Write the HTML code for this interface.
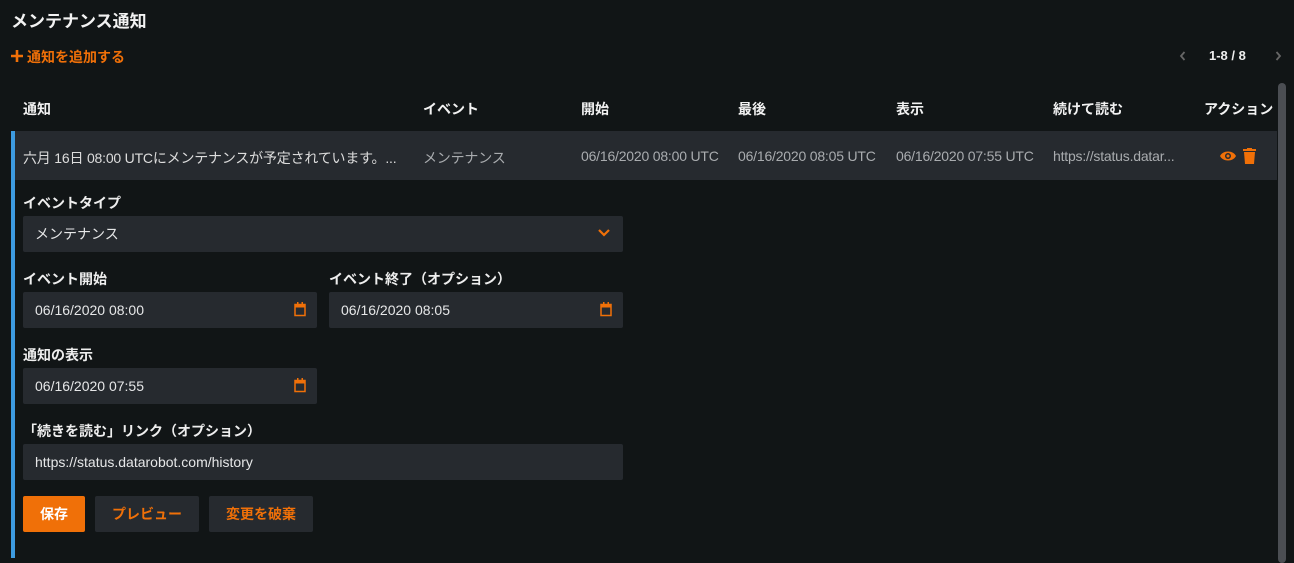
<!DOCTYPE html>
<html><head><meta charset="utf-8"><style>
*{margin:0;padding:0;box-sizing:border-box}
body{width:1294px;height:558px;background:#111516;font-family:"Liberation Sans","Noto Sans CJK JP",sans-serif;color:#e6e7e8;position:relative;overflow:hidden;font-size:14px}
.a{position:absolute;white-space:nowrap}
.h{font-weight:bold;font-size:14px;color:#f2f2f2}
.o{color:#f07008}
.in{position:absolute;background:#262a2f;border-radius:2px;height:36px;font-size:14px;color:#e6e7e8;padding:0 12px;line-height:36px}
.lab{position:absolute;font-weight:bold;font-size:14px;color:#eee}
.cell{position:absolute;top:148px;font-size:14px;color:#a9acaf;letter-spacing:-0.2px}
svg{position:absolute}
</style></head><body>
<div class="a" style="left:11px;top:7px;font-size:17px;font-weight:bold;color:#f2f2f2">メンテナンス通知</div>
<svg style="left:11px;top:50px" width="12" height="12" viewBox="0 0 12 12"><path d="M6 0V12M0 6H12" stroke="#f07008" stroke-width="2.6"/></svg>
<div class="a o" style="left:27px;top:47px;font-size:14px;font-weight:bold">通知を追加する</div>
<svg style="left:1179px;top:51px" width="7" height="10" viewBox="0 0 7 10"><path d="M5.5 1L2 5L5.5 9" stroke="#666" stroke-width="1.8" fill="none"/></svg>
<div class="a" style="left:1209px;top:48px;font-weight:bold;font-size:13px;color:#eee">1-8 / 8</div>
<svg style="left:1275px;top:51px" width="7" height="10" viewBox="0 0 7 10"><path d="M1.5 1L5 5L1.5 9" stroke="#666" stroke-width="1.8" fill="none"/></svg>
<div class="a h" style="left:23px;top:99px">通知</div>
<div class="a h" style="left:423px;top:99px">イベント</div>
<div class="a h" style="left:581px;top:99px">開始</div>
<div class="a h" style="left:738px;top:99px">最後</div>
<div class="a h" style="left:896px;top:99px">表示</div>
<div class="a h" style="left:1053px;top:99px">続けて読む</div>
<div class="a h" style="left:1204px;top:99px">アクション</div>
<div class="a" style="left:11px;top:131px;width:1266px;height:49px;background:#262a2f"></div>
<div class="a" style="left:11px;top:131px;width:4px;height:427px;background:#3d9be0"></div>
<div class="a" style="left:1278px;top:83px;width:8px;height:480px;background:#4b4e53;border-radius:4px"></div>
<div class="cell" style="left:23px;color:#ddd">六月 16日 08:00 UTCにメンテナンスが予定されています。...</div>
<div class="cell" style="left:423px">メンテナンス</div>
<div class="cell" style="left:581px">06/16/2020 08:00 UTC</div>
<div class="cell" style="left:738px">06/16/2020 08:05 UTC</div>
<div class="cell" style="left:896px">06/16/2020 07:55 UTC</div>
<div class="cell" style="left:1053px">https://status.datar...</div>
<svg style="left:1219px;top:149px" width="18" height="14" viewBox="0 0 18 14"><path d="M1 7C4 1 14 1 17 7C14 13 4 13 1 7Z" fill="#f07008"/><circle cx="9" cy="7" r="3" fill="#262a2f"/><circle cx="9" cy="7" r="1.5" fill="#f07008"/></svg>
<svg style="left:1243px;top:148px" width="13" height="16" viewBox="0 0 13 16"><rect x="0" y="1" width="13" height="2" fill="#f07008"/><rect x="4" y="0" width="5" height="2" fill="#f07008"/><path d="M1 4H12L11 16H2Z" fill="#f07008"/></svg>
<div class="lab" style="left:23px;top:193px">イベントタイプ</div>
<div class="in" style="left:23px;top:216px;width:600px">メンテナンス</div>
<svg style="left:597px;top:228px" width="14" height="10" viewBox="0 0 14 10"><path d="M2 2L7 7L12 2" stroke="#f07008" stroke-width="2.2" fill="none"/></svg>
<div class="lab" style="left:23px;top:269px">イベント開始</div>
<div class="lab" style="left:329px;top:269px">イベント終了（オプション）</div>
<div class="in" style="left:23px;top:292px;width:294px">06/16/2020 08:00</div>
<div class="in" style="left:329px;top:292px;width:294px">06/16/2020 08:05</div>
<div class="lab" style="left:23px;top:345px">通知の表示</div>
<div class="in" style="left:23px;top:368px;width:294px">06/16/2020 07:55</div>
<svg style="left:294px;top:302px" width="12" height="15" viewBox="0 0 12 15"><rect x="1" y="2.5" width="10" height="11" fill="none" stroke="#f07008" stroke-width="1.5"/><rect x="1" y="2.5" width="10" height="3" fill="#f07008"/><rect x="3" y="0" width="1.5" height="3" fill="#f07008"/><rect x="7.5" y="0" width="1.5" height="3" fill="#f07008"/></svg>
<svg style="left:600px;top:302px" width="12" height="15" viewBox="0 0 12 15"><rect x="1" y="2.5" width="10" height="11" fill="none" stroke="#f07008" stroke-width="1.5"/><rect x="1" y="2.5" width="10" height="3" fill="#f07008"/><rect x="3" y="0" width="1.5" height="3" fill="#f07008"/><rect x="7.5" y="0" width="1.5" height="3" fill="#f07008"/></svg>
<svg style="left:294px;top:378px" width="12" height="15" viewBox="0 0 12 15"><rect x="1" y="2.5" width="10" height="11" fill="none" stroke="#f07008" stroke-width="1.5"/><rect x="1" y="2.5" width="10" height="3" fill="#f07008"/><rect x="3" y="0" width="1.5" height="3" fill="#f07008"/><rect x="7.5" y="0" width="1.5" height="3" fill="#f07008"/></svg>
<div class="lab" style="left:23px;top:421px">「続きを読む」リンク（オプション）</div>
<div class="in" style="left:23px;top:444px;width:600px">https://status.datarobot.com/history</div>
<div class="a" style="left:23px;top:496px;width:62px;height:36px;background:#f07008;border-radius:2px;color:#fff;font-weight:bold;text-align:center;line-height:36px">保存</div>
<div class="a o" style="left:95px;top:496px;width:104px;height:36px;background:#262a2f;border-radius:2px;font-weight:bold;text-align:center;line-height:36px">プレビュー</div>
<div class="a o" style="left:209px;top:496px;width:104px;height:36px;background:#262a2f;border-radius:2px;font-weight:bold;text-align:center;line-height:36px">変更を破棄</div>
</body></html>
